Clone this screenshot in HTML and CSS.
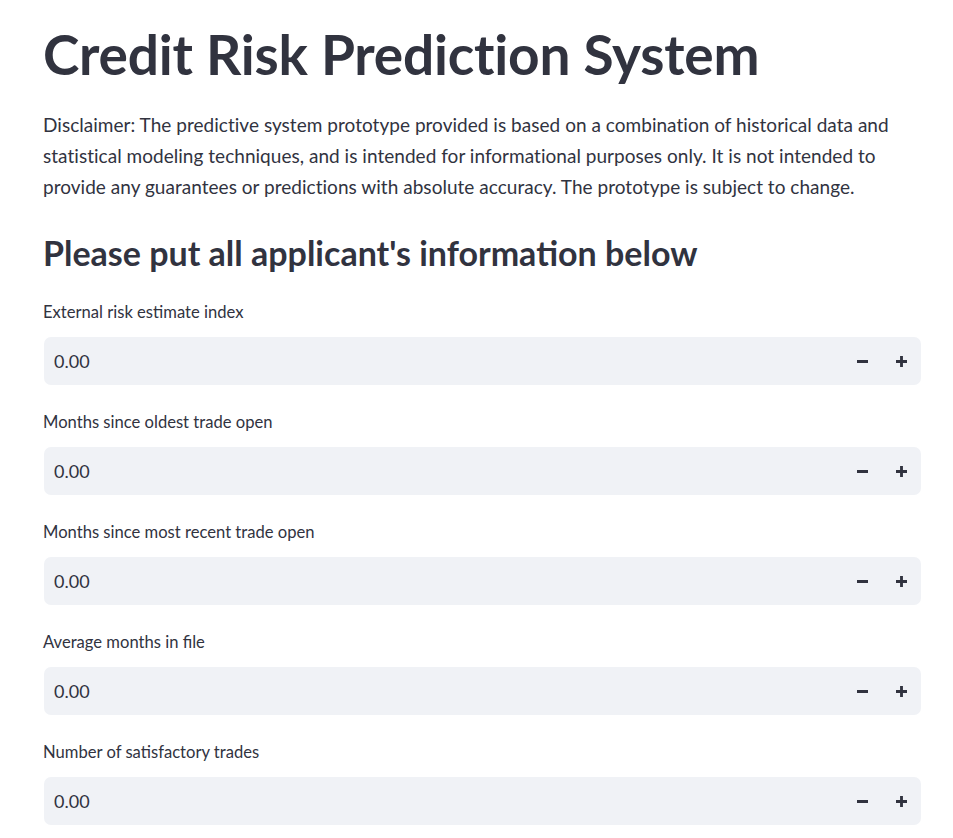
FILE: index.html
```html
<!DOCTYPE html>
<html lang="en">
<head>
<meta charset="utf-8">
<title>Credit Risk Prediction System</title>
<link rel="stylesheet" href="styles.css">
</head>
<body>
<main class="app">
  <h1 class="title">Credit Risk Prediction System</h1>
  <p class="disclaimer">Disclaimer: The predictive system prototype provided is based on a combination of historical data and statistical modeling techniques, and is intended for informational purposes only. It is not intended to provide any guarantees or predictions with absolute accuracy. The prototype is subject to change.</p>
  <h2 class="header">Please put all applicant's information below</h2>

  <div class="fields">
    <div class="field">
      <label class="label">External risk estimate index</label>
      <div class="numinput">
        <input class="value" type="text" value="0.00">
        <button class="step" aria-label="decrement"><svg viewBox="0 0 10 10" width="11" height="11"><path d="M0 5h10" /></svg></button>
        <button class="step" aria-label="increment"><svg viewBox="0 0 10 10" width="11" height="11"><path d="M0 5h10M5 0v10" /></svg></button>
      </div>
    </div>
    <div class="field">
      <label class="label">Months since oldest trade open</label>
      <div class="numinput">
        <input class="value" type="text" value="0.00">
        <button class="step" aria-label="decrement"><svg viewBox="0 0 10 10" width="11" height="11"><path d="M0 5h10" /></svg></button>
        <button class="step" aria-label="increment"><svg viewBox="0 0 10 10" width="11" height="11"><path d="M0 5h10M5 0v10" /></svg></button>
      </div>
    </div>
    <div class="field">
      <label class="label">Months since most recent trade open</label>
      <div class="numinput">
        <input class="value" type="text" value="0.00">
        <button class="step" aria-label="decrement"><svg viewBox="0 0 10 10" width="11" height="11"><path d="M0 5h10" /></svg></button>
        <button class="step" aria-label="increment"><svg viewBox="0 0 10 10" width="11" height="11"><path d="M0 5h10M5 0v10" /></svg></button>
      </div>
    </div>
    <div class="field">
      <label class="label">Average months in file</label>
      <div class="numinput">
        <input class="value" type="text" value="0.00">
        <button class="step" aria-label="decrement"><svg viewBox="0 0 10 10" width="11" height="11"><path d="M0 5h10" /></svg></button>
        <button class="step" aria-label="increment"><svg viewBox="0 0 10 10" width="11" height="11"><path d="M0 5h10M5 0v10" /></svg></button>
      </div>
    </div>
    <div class="field">
      <label class="label">Number of satisfactory trades</label>
      <div class="numinput">
        <input class="value" type="text" value="0.00">
        <button class="step" aria-label="decrement"><svg viewBox="0 0 10 10" width="11" height="11"><path d="M0 5h10" /></svg></button>
        <button class="step" aria-label="increment"><svg viewBox="0 0 10 10" width="11" height="11"><path d="M0 5h10M5 0v10" /></svg></button>
      </div>
    </div>
  </div>
</main>
</body>
</html>
```

FILE: styles.css
```css
html, body {
  margin: 0;
  padding: 0;
  background: #ffffff;
}

body {
  font-family: Lato, "Noto Sans", sans-serif;
  color: #31333f;
  overflow: hidden;
}

.app {
  width: 878px;
  padding: 0 0 0 43px;
}

.title {
  margin: 21px 0 0 0;
  font-size: 55px;
  line-height: 66px;
  font-weight: 700;
  letter-spacing: -0.2px;
  white-space: nowrap;
}

.disclaimer {
  margin: 21.5px 0 0 0;
  font-size: 19px;
  line-height: 31.4px;
  font-weight: 400;
  letter-spacing: 0.03px;
}

.header {
  margin: 27.6px 0 0 0;
  font-size: 34px;
  line-height: 45px;
  font-weight: 700;
  white-space: nowrap;
}

.fields {
  display: flex;
  flex-direction: column;
  gap: 24.5px;
  margin-top: 24.2px;
}

.field {
  display: flex;
  flex-direction: column;
  gap: 13.5px;
}

.label {
  font-size: 16.6px;
  line-height: 24px;
}

.numinput {
  display: flex;
  align-items: stretch;
  height: 48px;
  margin-left: 1px;
  background: #f0f2f6;
  border-radius: 7px;
  overflow: hidden;
}

.value {
  flex: 1;
  min-width: 0;
  border: none;
  background: transparent;
  padding: 0 0 0 10px;
  font-family: Lato, "Noto Sans", sans-serif;
  font-size: 18px;
  color: #31333f;
  outline: none;
}

.step {
  width: 39px;
  border: none;
  background: transparent;
  padding: 0;
  display: flex;
  align-items: center;
  justify-content: center;
  color: #31333f;
}

.step svg {
  display: block;
}

.step path {
  stroke: #31333f;
  stroke-width: 2.6;
  fill: none;
}
```
